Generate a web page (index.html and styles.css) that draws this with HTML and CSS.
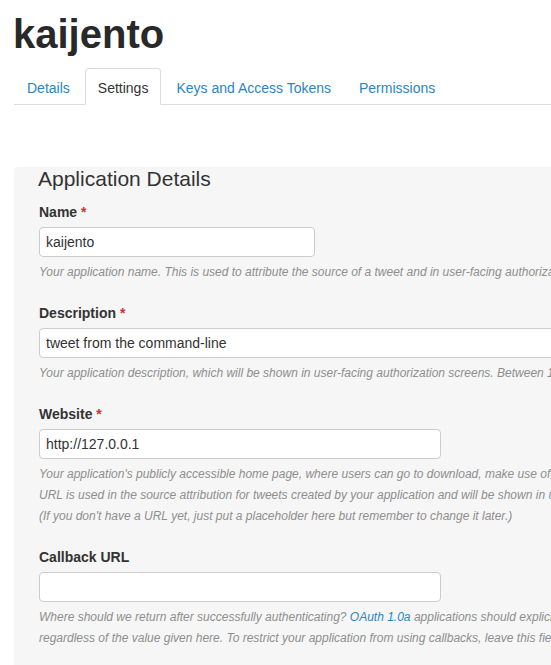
FILE: index.html
```html
<!DOCTYPE html>
<html>
<head>
<meta charset="utf-8">
<title>kaijento</title>
<link rel="stylesheet" href="styles.css">
</head>
<body>
<div class="page">
  <h1 class="app-title">kaijento</h1>
  <ul class="tabs">
    <li class="tab"><a href="#">Details</a></li>
    <li class="tab active"><a href="#">Settings</a></li>
    <li class="tab"><a href="#">Keys and Access Tokens</a></li>
    <li class="tab"><a href="#">Permissions</a></li>
  </ul>
  <div class="panel">
    <h2 class="panel-title">Application Details</h2>

    <div class="field">
      <label class="label">Name <span class="req">*</span></label>
      <input class="input input-name" type="text" value="kaijento">
      <p class="help">Your application name. This is used to attribute the source of a tweet and in user-facing authorization screens. 32 characters max.</p>
    </div>

    <div class="field">
      <label class="label">Description <span class="req">*</span></label>
      <input class="input input-wide" type="text" value="tweet from the command-line">
      <p class="help">Your application description, which will be shown in user-facing authorization screens. Between 10 and 200 characters max.</p>
    </div>

    <div class="field">
      <label class="label">Website <span class="req">*</span></label>
      <input class="input input-url" type="text" value="http://127.0.0.1">
      <p class="help">Your application's publicly accessible home page, where users can go to download, make use of, or find out more information about your application. This fully-qualified<br>URL is used in the source attribution for tweets created by your application and will be shown in user-facing authorization screens.<br>(If you don't have a URL yet, just put a placeholder here but remember to change it later.)</p>
    </div>

    <div class="field">
      <label class="label">Callback URL</label>
      <input class="input input-url" type="text" value="">
      <p class="help">Where should we return after successfully authenticating? <a href="#" class="help-link">OAuth 1.0a</a> applications should explicitly specify their oauth_callback URL on the request token step,<br>regardless of the value given here. To restrict your application from using callbacks, leave this field blank.</p>
    </div>
  </div>
</div>
</body>
</html>
```

FILE: styles.css
```css
html, body {
  margin: 0;
  padding: 0;
  overflow: hidden;
  background: #fff;
}

body {
  font-family: "Liberation Sans", Arial, sans-serif;
  color: #333;
}

.page {
  padding-left: 14px;
}

.app-title {
  margin: 12px 0 0 -1px;
  font-size: 40px;
  line-height: 44px;
  font-weight: bold;
  color: #292929;
  letter-spacing: 0;
}

.tabs {
  list-style: none;
  margin: 12px 0 0 0;
  padding: 0;
  display: flex;
  border-bottom: 1px solid #ddd;
  width: 760px;
}

.tab {
  margin-right: 2px;
  margin-bottom: -1px;
}

.tab a {
  display: block;
  padding: 10px 12px 6px;
  font-size: 14px;
  line-height: 19px;
  color: #2b85c2;
  text-decoration: none;
  border: 1px solid transparent;
  border-radius: 4px 4px 0 0;
}

.tab.active a {
  color: #333;
  background: #fff;
  border-color: #ddd #ddd transparent #ddd;
}

.panel {
  margin-top: 62px;
  width: 760px;
  background: #f6f6f6;
  border-radius: 4px 0 0 0;
  padding: 0 0 40px 25px;
}

.panel-title {
  margin: 0 0 11px -1px;
  font-size: 21px;
  line-height: 24px;
  font-weight: normal;
  color: #333;
}

.field {
  margin-bottom: 20px;
}

.label {
  display: block;
  font-size: 14px;
  line-height: 20px;
  font-weight: bold;
  color: #333;
  margin-bottom: 5px;
}

.req {
  color: #e0282e;
}

.input {
  display: block;
  box-sizing: border-box;
  height: 30px;
  margin: 0;
  padding: 4px 6px;
  border: 1px solid #ccc;
  border-radius: 4px;
  background: #fff;
  font-family: "Liberation Sans", Arial, sans-serif;
  font-size: 14px;
  color: #333;
  outline: none;
}

.input-name {
  width: 276px;
}

.input-wide {
  width: 700px;
}

.input-url {
  width: 402px;
}

.help {
  margin: 5px 0 0 0;
  font-size: 12px;
  line-height: 21px;
  font-style: italic;
  color: #8e8e8e;
  white-space: nowrap;
}

.help-link {
  color: #2b85c2;
  text-decoration: none;
}
```
